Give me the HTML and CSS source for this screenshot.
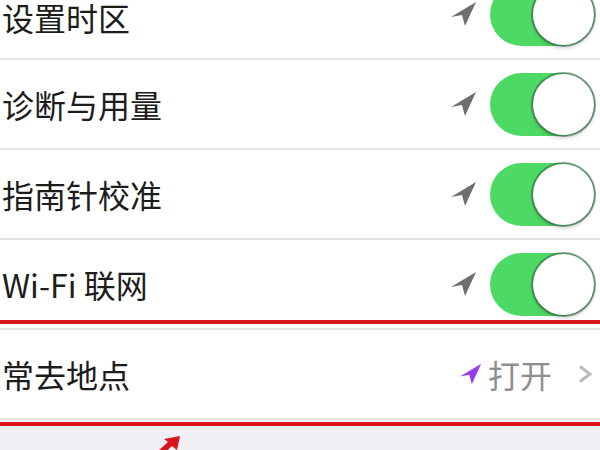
FILE: index.html
```html
<!DOCTYPE html>
<html lang="zh-CN">
<head>
    <meta charset="UTF-8">
    <meta name="viewport" content="width=device-width, initial-scale=1.0">
    <title>定位服务 - 系统服务</title>
    <link rel="stylesheet" href="styles.css">
</head>
<body>

    <div class="screen">
        <ul class="list">
            <li class="row row-first">
                <span class="label">设置时区</span>
                <span class="accessory">
                    <svg class="loc" viewBox="0 0 26 26"><polygon points="25,1 0,16 11,14 14,25"/></svg>
                    <span class="switch"><span class="knob"></span></span>
                </span>
            </li>
            <li class="row">
                <span class="label">诊断与用量</span>
                <span class="accessory">
                    <svg class="loc" viewBox="0 0 26 26"><polygon points="25,1 0,16 11,14 14,25"/></svg>
                    <span class="switch"><span class="knob"></span></span>
                </span>
            </li>
            <li class="row">
                <span class="label">指南针校准</span>
                <span class="accessory">
                    <svg class="loc" viewBox="0 0 26 26"><polygon points="25,1 0,16 11,14 14,25"/></svg>
                    <span class="switch"><span class="knob"></span></span>
                </span>
            </li>
            <li class="row">
                <span class="label">Wi-Fi 联网</span>
                <span class="accessory">
                    <svg class="loc" viewBox="0 0 26 26"><polygon points="25,1 0,16 11,14 14,25"/></svg>
                    <span class="switch"><span class="knob"></span></span>
                </span>
            </li>
            <li class="row">
                <span class="label">常去地点</span>
                <span class="accessory">
                    <svg class="loc loc-on" viewBox="0 0 26 26"><polygon points="25,1 0,16 11,14 14,25"/></svg>
                    <span class="value">打开</span>
                    <svg class="chevron" viewBox="0 0 14 18"><polyline points="2,1.5 12,9 2,16.5"/></svg>
                </span>
            </li>
        </ul>
        <div class="footer-band"></div>

        <!-- annotation drawn over the screenshot -->
        <div class="mark-box"></div>
        <svg class="mark-arrow" viewBox="0 0 40 30"><polygon points="30,0 27,14 22,10 0,30 -4,26 18,6 14,3"/></svg>
    </div>

</body>
</html>
```

FILE: styles.css
```css
body {
    margin: 0;
    background: #ffffff;
    font-family: "Noto Sans CJK SC", "Noto Sans", sans-serif;
    color: #1c1c1c;
    overflow: hidden;
}
.screen {
    position: relative;
    width: 600px;
    height: 450px;
    overflow: hidden;
}
.list {
    list-style: none;
    margin: -30px 0 0 0;
    padding: 0;
}
.row {
    height: 88px;
    display: flex;
    align-items: center;
    justify-content: space-between;
    padding: 0 5px 0 2px;
    border-bottom: 2px solid #e4e4e6;
}
.label {
    font-size: 32px;
    line-height: 1;
}
.row-first .label {
    margin-top: 6px;
}
.accessory {
    display: flex;
    align-items: center;
}
.loc {
    width: 26px;
    height: 26px;
    fill: #6e6e72;
    margin-right: 13px;
}
.loc-on {
    width: 22px;
    height: 22px;
    fill: #9a3df0;
    margin-right: 6px;
}
.switch {
    width: 105px;
    height: 63px;
    border-radius: 32px;
    background: #4cd964;
    display: flex;
    justify-content: flex-end;
    align-items: center;
    padding: 0 1px;
    box-sizing: border-box;
}
.knob {
    width: 61px;
    height: 61px;
    border-radius: 50%;
    background: #ffffff;
    box-shadow: 0 0 0 2px rgba(60, 90, 70, 0.55), 0 3px 4px rgba(0, 0, 0, 0.2);
}
.value {
    font-size: 32px;
    line-height: 1;
    color: #8e8e93;
    margin-right: 26px;
}
.chevron {
    width: 14px;
    height: 18px;
    fill: none;
    stroke: #b9b9be;
    stroke-width: 3;
    margin-right: 3px;
}
.footer-band {
    height: 40px;
    background: #efeff4;
}
.mark-box {
    position: absolute;
    top: 320px;
    left: -10px;
    right: -10px;
    height: 98px;
    border: 4px solid #d9141c;
}
.mark-arrow {
    position: absolute;
    left: 150px;
    top: 436px;
    width: 40px;
    height: 30px;
    fill: #d9141c;
    overflow: visible;
}
```
